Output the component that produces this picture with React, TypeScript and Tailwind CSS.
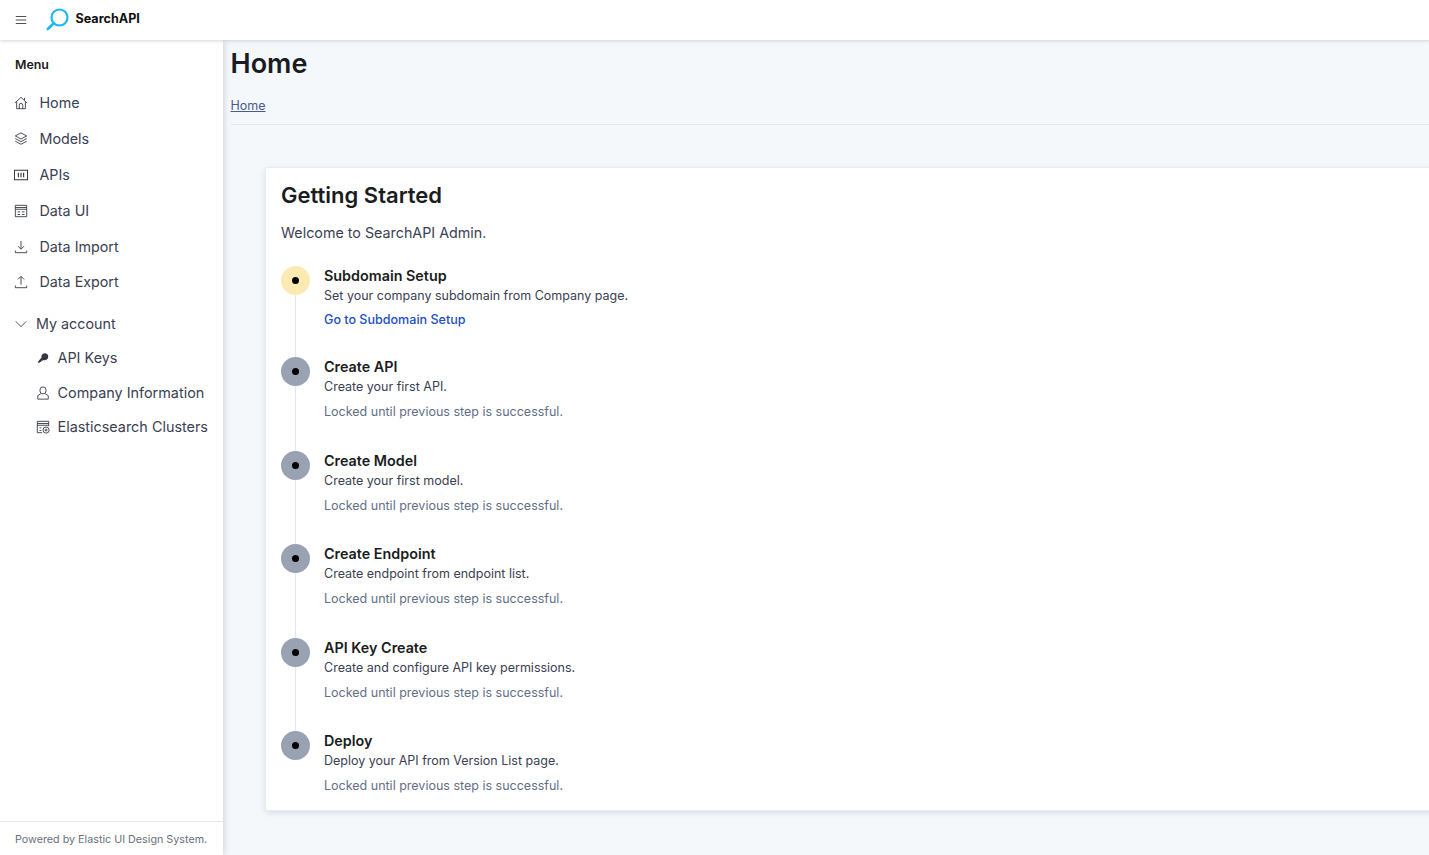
import { ReactNode } from 'react';

const Icon = ({ children }: { children: ReactNode }) => (
  <svg viewBox="0 0 16 16" fill="none" stroke="#343741" strokeWidth="1" className="h-[14px] w-[14px] shrink-0">
    {children}
  </svg>
);

const HomeIcon = () => (
  <Icon>
    <path d="M1 8l7-6.500L15 8M3 6.500v8h10v-8M6 14.500V10.500a2 2 0 0 1 4 0v4M12 2v2.500" />
  </Icon>
);
const LayersIcon = () => (
  <Icon>
    <path d="M8 1l6.500 3.500L8 8 1.500 4.500 8 1zM1.500 7.500L8 11l6.500-3.500M1.500 10.500L8 14l6.500-3.500" />
  </Icon>
);
const ApiIcon = () => (
  <Icon>
    <path d="M.5 2.500h15v11H.5z" strokeWidth="1.200" />
    <path d="M5 5.500v5M8 5.500v5M11 5.500v5" strokeWidth="1.300" />
  </Icon>
);
const TableIcon = () => (
  <Icon>
    <path d="M1.500 1.500h13v13h-13zM1.500 4h13M1.500 6h13M4 9h3M9 9h3M4 12h3M9 12h3" />
  </Icon>
);
const ImportIcon = () => (
  <Icon>
    <path d="M8 1v9M4.500 7L8 10.500 11.500 7M1.500 12v2.500h13V12" />
  </Icon>
);
const ExportIcon = () => (
  <Icon>
    <path d="M8 11V2M4.500 5L8 1.500 11.500 5M1.500 12v2.500h13V12" />
  </Icon>
);
const KeyIcon = () => (
  <svg viewBox="0 0 16 16" fill="#343741" className="h-[14px] w-[14px] shrink-0">
    <path d="M10 2.500a4 4 0 0 1 4 4 4 4 0 0 1-5.500 3.700L7.500 11.200H6v1.500H4.500L3.500 14 2 12.500 6.300 7.500A4 4 0 0 1 10 2.500z" />
  </svg>
);
const UserIcon = () => (
  <Icon>
    <path d="M8 1a3.500 3.500 0 0 1 3.500 3.500v1a3.500 3.500 0 0 1-7 0v-1A3.500 3.500 0 0 1 8 1zM5.500 8.800L2 11v4h12v-4l-3.500-2.200" />
  </Icon>
);
const ClusterIcon = () => (
  <Icon>
    <path d="M7 14.500H1.500v-13h13V7M1.500 4h13M1.500 6h13M4 9h2M4 12h2" />
    <circle cx="11.500" cy="11.500" r="3.500" />
    <path d="M11.500 9.800v3.400M9.800 11.500h3.400" />
  </Icon>
);

const menu = [
  { label: 'Home', icon: <HomeIcon />, cls: 'h-9' },
  { label: 'Models', icon: <LayersIcon />, cls: 'h-9' },
  { label: 'APIs', icon: <ApiIcon />, cls: 'h-9' },
  { label: 'Data UI', icon: <TableIcon />, cls: 'h-9' },
  { label: 'Data Import', icon: <ImportIcon />, cls: 'h-9' },
  { label: 'Data Export', icon: <ExportIcon />, cls: 'h-[34px]' },
];

const account = [
  { label: 'API Keys', icon: <KeyIcon />, cls: 'h-[33px]' },
  { label: 'Company Information', icon: <UserIcon />, cls: 'h-[37px]' },
  { label: 'Elasticsearch Clusters', icon: <ClusterIcon />, cls: 'h-[31px]' },
];

const steps = [
  { title: 'Subdomain Setup', text: 'Set your company subdomain from Company page.', h: 'h-[91px]', active: true },
  { title: 'Create API', text: 'Create your first API.', h: 'h-[93.600px]' },
  { title: 'Create Model', text: 'Create your first model.', h: 'h-[93.600px]' },
  { title: 'Create Endpoint', text: 'Create endpoint from endpoint list.', h: 'h-[93.600px]' },
  { title: 'API Key Create', text: 'Create and configure API key permissions.', h: 'h-[93.600px]' },
  { title: 'Deploy', text: 'Deploy your API from Version List page.', h: 'h-[79px]', last: true },
];

export default function App() {
  return (
    <div className="flex h-[855px] w-[1429px] flex-col overflow-hidden bg-[#f5f8fb] font-['Inter',sans-serif] text-[#3a4152]">
      {/* Top bar */}
      <header className="relative z-20 flex h-10 shrink-0 items-center bg-white pl-[14px] shadow-[0_1px_3px_rgba(152,162,179,0.45)]">
        <svg viewBox="0 0 16 16" fill="none" stroke="#343741" className="h-3.5 w-3.5">
          <path d="M2 4h12M2 8h12M2 12h12" />
        </svg>
        <svg viewBox="0 0 24 24" fill="none" className="ml-[18px] h-[24px] w-[24px]">
          <circle cx="13.500" cy="9.500" r="8" stroke="#1bb8f5" strokeWidth="2.200" />
          <path d="M7.500 15.500L1.800 21" stroke="#1bb8f5" strokeWidth="2.600" strokeLinecap="round" />
        </svg>
        <span className="ml-[5.500px] -mt-[2px] text-[12.600px] font-bold text-[#111]">SearchAPI</span>
      </header>

      <div className="flex min-h-0 flex-1">
        {/* Sidebar */}
        <aside className="relative z-10 flex w-[223px] shrink-0 flex-col bg-white shadow-[1px_0_6px_rgba(152,162,179,0.45)]">
          <div className="flex-1 pl-[15px] pt-[18px]">
            <h2 className="mb-[13px] text-[12.400px] leading-[14px] font-semibold text-[#1a1c21]">Menu</h2>
            {menu.map((m) => (
              <div key={m.label} className={`flex items-center gap-[10.500px] text-[14.300px] ${m.cls}`}>
                <span className="-ml-px flex w-[14px] justify-center">{m.icon}</span>
                <span className="ml-px">{m.label}</span>
              </div>
            ))}
            <div className="mt-[7px] flex h-[35px] items-center gap-[7px] text-[14.300px]">
              <svg viewBox="0 0 16 16" fill="none" stroke="#343741" className="-ml-px h-3.5 w-3.5">
                <path d="M2 5l6 6 6-6" />
              </svg>
              <span className="ml-px">My account</span>
            </div>
            <div className="pl-[21px]">
              {account.map((a) => (
                <div key={a.label} className={`flex items-center gap-[7.500px] text-[14.400px] ${a.cls}`}>
                  {a.icon}
                  <span className="whitespace-nowrap">{a.label}</span>
                </div>
              ))}
            </div>
          </div>
          <div className="flex h-[34px] items-center border-t border-[#e3e6ef] pl-[15px] pt-[3px] text-[10.750px] text-[#69707d]">
            Powered by Elastic UI Design System.
          </div>
        </aside>

        {/* Main */}
        <main className="min-w-0 flex-1 pl-[7.500px]">
          <div className="h-[85px] border-b border-[#e3e6ef]">
            <h1 className="pt-[6px] text-[27px] leading-9 font-semibold text-[#1a1c21]">Home</h1>
            <a className="mt-4 block text-[12.500px] leading-4 text-[#4a5a8a] underline">Home</a>
          </div>
          <section className="ml-[34.500px] mt-[42px] w-[1300px] rounded-[3px] border border-[#e9edf3] bg-white pl-[15px] pt-[12px] shadow-[0_2px_6px_rgba(152,162,179,0.3)]">
            <h2 className="text-[22px] leading-[30px] font-semibold text-[#1a1c21]">Getting Started</h2>
            <p className="mt-[13px] text-[14.300px] leading-5">Welcome to SearchAPI Admin.</p>
            <ol className="mt-[23px]">
              {steps.map((s) => (
                <li key={s.title} className={`flex gap-[14px] ${s.h}`}>
                  <div className="flex w-[29px] shrink-0 flex-col items-center">
                    <div className={`flex h-[29px] w-[29px] shrink-0 items-center justify-center rounded-full ${s.active ? 'bg-[#fde9b2]' : 'bg-[#98a2b3]'}`}>
                      <span className="h-[7px] w-[7px] rounded-full bg-black" />
                    </div>
                    {!s.last && <span className="w-px flex-1 bg-[#e0e5ee]" />}
                  </div>
                  <div>
                    <h3 className="pt-px text-[14.350px] leading-[18px] font-semibold text-[#1a1c21]">{s.title}</h3>
                    <p className="mt-[3px] text-[12.500px] leading-4">{s.text}</p>
                    {s.active ? (
                      <a className="mt-2 block text-[12.550px] leading-4 font-medium text-[#1d4fc4]">Go to Subdomain Setup</a>
                    ) : (
                      <p className="mt-[9px] text-[12.500px] leading-4 text-[#646f85]">Locked until previous step is successful.</p>
                    )}
                  </div>
                </li>
              ))}
            </ol>
          </section>
        </main>
      </div>
    </div>
  );
}
